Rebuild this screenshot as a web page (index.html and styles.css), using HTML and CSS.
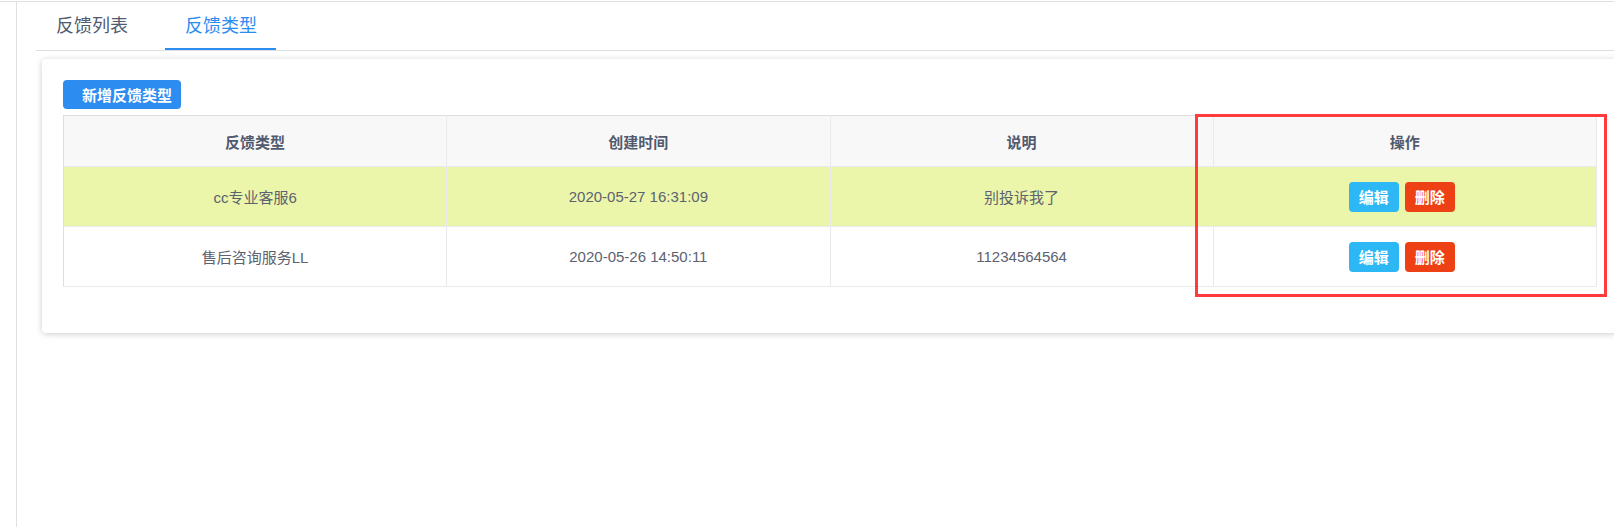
FILE: index.html
```html
<!DOCTYPE html>
<html lang="zh-CN">
  <head>
    <meta charset="UTF-8" />
    <title>反馈类型</title>
    <link rel="stylesheet" href="styles.css">
  </head>
  <body>
    <div class="layout">
      <div class="aside"></div>
      <div class="main">
        <div class="tabs">
          <div class="tab">反馈列表</div>
          <div class="tab active">反馈类型</div>
        </div>

        <div class="card">
          <button class="btn btn-primary">新增反馈类型</button>
          <table class="data-table">
            <thead>
              <tr>
                <th>反馈类型</th>
                <th>创建时间</th>
                <th>说明</th>
                <th>操作</th>
              </tr>
            </thead>
            <tbody>
              <tr class="row-highlight">
                <td>cc专业客服6</td>
                <td>2020-05-27 16:31:09</td>
                <td>别投诉我了</td>
                <td>
                  <button class="btn btn-info">编辑</button><button class="btn btn-error">删除</button>
                </td>
              </tr>
              <tr>
                <td>售后咨询服务LL</td>
                <td>2020-05-26 14:50:11</td>
                <td>11234564564</td>
                <td>
                  <button class="btn btn-info">编辑</button><button class="btn btn-error">删除</button>
                </td>
              </tr>
            </tbody>
          </table>
        </div>
      </div>
    </div>

    <!-- annotation frame drawn over the actions column -->
    <div class="mark-box"></div>
  </body>
</html>
```

FILE: styles.css
```css
html, body {
  margin: 0;
  height: 100%;
}
body {
  font-family: "Liberation Sans", Arial, "Noto Sans CJK SC", sans-serif;
  background: #fff;
  color: #515a6e;
  overflow: hidden;
  position: relative;
}
.layout {
  display: flex;
  height: 100%;
  margin-top: 1px;
  border-top: 1px solid #e0e0e0;
}
.aside {
  width: 16px;
  border-right: 1px solid #e0e0e0;
  flex-shrink: 0;
}
.main {
  flex: 1;
  padding-left: 19px;
  min-width: 0;
}
.tabs {
  display: flex;
  gap: 18px;
  border-bottom: 1px solid #dcdee2;
}
.tab {
  height: 43px;
  padding: 0 19px 3px 20px;
  border-bottom: 2px solid transparent;
  display: flex;
  align-items: center;
  font-size: 18px;
  color: #515a6e;
}
.tab.active {
  color: #2d8cf0;
  border-bottom-color: #2d8cf0;
}
.card {
  margin: 8px -4px 0 6px;
  padding: 21px 21px 46px;
  background: #fff;
  border-radius: 4px;
  box-shadow: 0 1px 6px rgba(0, 0, 0, 0.2);
}
.btn {
  font-family: inherit;
  border: none;
  color: #fff;
  cursor: pointer;
  font-size: 15px;
  font-weight: bold;
  border-radius: 4px;
}
.btn-primary {
  display: block;
  height: 29px;
  padding: 0 9px 0 19px;
  background: #2d8cf0;
  margin-bottom: 6px;
}
.btn-info,
.btn-error {
  width: 50px;
  height: 30px;
  padding: 0;
  margin: 0 6px 0 0;
  vertical-align: middle;
}
.btn-info {
  background: #2db7f5;
}
.btn-error {
  background: #ed4014;
}
.data-table {
  width: 100%;
  table-layout: fixed;
  border-collapse: collapse;
  border: 1px solid #dcdee2;
  font-size: 15px;
}
.data-table th,
.data-table td {
  text-align: center;
  border-right: 1px solid #e8eaec;
  border-bottom: 1px solid #e8eaec;
  padding: 0;
}
.data-table th {
  height: 50px;
  background: #f8f8f9;
  font-weight: bold;
  color: #515a6e;
}
.data-table td {
  height: 59px;
  color: #5c6270;
}
.row-highlight td {
  background: #ebf6ab;
}
.mark-box {
  position: absolute;
  left: 1195px;
  top: 114px;
  width: 406px;
  height: 177px;
  border: 3px solid #ff3b3b;
  pointer-events: none;
}
```
